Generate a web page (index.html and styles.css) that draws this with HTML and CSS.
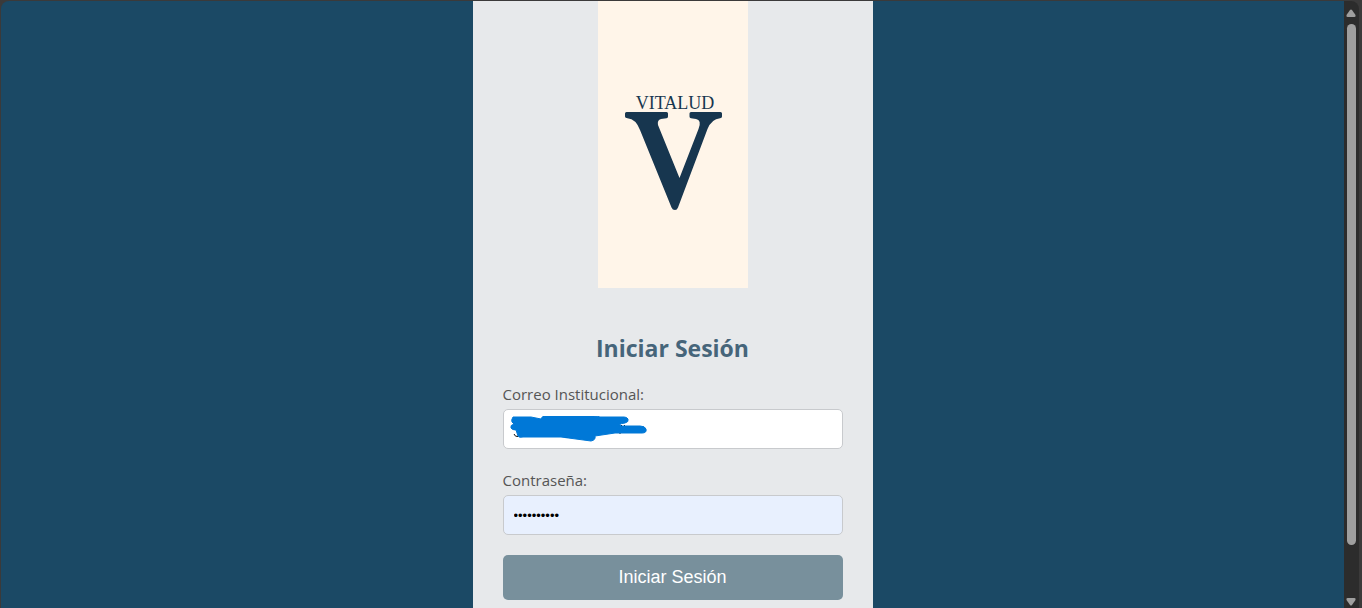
FILE: index.html
```html
<!DOCTYPE html>
<html lang="es">
<head>
<meta charset="utf-8">
<meta name="viewport" content="width=device-width, initial-scale=1">
<title>Iniciar Sesión</title>
<link rel="stylesheet" href="styles.css">
</head>
<body>
<div class="window">
  <main class="page">
    <section class="card">
      <svg class="logo" viewBox="0 0 150 287" role="img" aria-label="Vitalud">
        <rect class="logo-bg" width="150" height="287"/>
        <text class="logo-name" x="77" y="108" text-anchor="middle">VITALUD</text>
        <path class="logo-mark" d="M28.500 111H68.500Q70 111 70 112.500V115.500Q70 117 68.500 117.200L63 118Q59 119 60 124L81.500 177L100.500 128Q104 119 98 118L93 117.200Q91.500 117 91.500 115.500V112.500Q91.500 111 93 111H122.500Q124 111 124 112.500V115.500Q124 117 122 117.200Q113.500 118 109.500 128L80 206.500Q79 209 77 209Q74.500 209 73.500 206.500L42 129Q38 118 29.500 117.200Q27 117 27 115.500V112.500Q27 111 28.500 111Z"/>
      </svg>
      <h1 class="title">Iniciar Sesión</h1>
      <form class="form">
        <div class="field">
          <label class="label" for="email">Correo Institucional:</label>
          <div class="control">
            <input class="input" id="email" type="email" autocomplete="off">
            <svg class="scribble" viewBox="0 0 140 28" aria-hidden="true">
              <path class="scribble-ink" d="M5 18Q6 21 9 20.500M101 9.500h3M106 9.500l3 1M112 9l1 1M116 9l-1 1M110 17h2M56 21.500h4"/>
              <path class="scribble-fill" d="M4 1Q2 4 3 6L5 8Q1 9 2 12Q3 14 7 14L9 20Q10 22 14 21H52L82 25Q87 24 86 20L106 17H133Q138 17 137 13Q136 10 131 10L112 10Q108 8 116 7Q120 6 119 3Q118 1 115 1H91Q89 0 84 0H36Q33 0 32 3L22 1Z"/>
            </svg>
          </div>
        </div>
        <div class="field">
          <label class="label" for="password">Contraseña:</label>
          <input class="input input-filled" id="password" type="password" value="0000000000" autocomplete="off">
        </div>
        <button class="submit" type="submit">Iniciar Sesión</button>
      </form>
    </section>
  </main>
  <div class="scrollbar" aria-hidden="true">
    <svg class="arrow" viewBox="0 0 10 8"><path d="M4 1Q5 0 6 1L9.500 6Q10 8 8.500 8H1.500Q0 8 .500 6Z"/></svg>
    <div class="thumb"></div>
    <svg class="arrow" viewBox="0 0 10 8"><path d="M4 7Q5 8 6 7L9.500 2Q10 0 8.500 0H1.500Q0 0 .500 2Z"/></svg>
  </div>
</div>
</body>
</html>
```
FILE: styles.css
```css
* {
  box-sizing: border-box;
}

body {
  margin: 0;
  background: #3b3a3a;
  font-family: "Segoe UI", "Open Sans", "Noto Sans", sans-serif;
}

.window {
  display: flex;
  height: 100vh;
  padding: 1px 3px 0 1px;
  overflow: hidden;
}

.page {
  flex: 1;
  display: flex;
  justify-content: center;
  align-items: flex-start;
  background: #1b4965;
  border-top-left-radius: 8px;
  overflow: hidden;
}

.card {
  width: 100%;
  max-width: 400px;
  padding: 0 30px 30px;
  background: #e7e9eb;
}

.logo {
  display: block;
  width: 150px;
  margin: 0 auto;
}

.logo-bg {
  fill: #fff5e9;
}

.logo-name {
  fill: #17364f;
  font-family: "Liberation Serif", serif;
  font-size: 18px;
}

.logo-mark {
  fill: #17364f;
}

.title {
  margin: 44px 0 19px;
  color: #46657a;
  font-size: 23px;
  font-weight: 700;
  line-height: 32px;
  text-align: center;
}

.field {
  margin-bottom: 20px;
}

.label {
  display: block;
  margin-bottom: 4px;
  color: #555;
  font-size: 15px;
  line-height: 22px;
}

.control {
  position: relative;
}

.input {
  display: block;
  width: 100%;
  height: 40px;
  padding: 10px;
  border: 1px solid #c8cacd;
  border-radius: 5px;
  background: #fff;
  color: #000;
  font-family: "Liberation Sans", Arial, sans-serif;
  font-size: 13px;
}

.input-filled {
  background: #e8f0fe;
}

.scribble {
  position: absolute;
  top: 7px;
  left: 6px;
  width: 140px;
  height: 28px;
}

.scribble-fill {
  fill: #0078d7;
  stroke: #0078d7;
  stroke-linejoin: round;
}

.scribble-ink {
  fill: none;
  stroke: #111;
}

.submit {
  display: block;
  width: 100%;
  height: 45px;
  border: 0;
  border-radius: 5px;
  background: #78909c;
  color: #fff;
  font-family: "Liberation Sans", Arial, sans-serif;
  font-size: 18px;
}

.scrollbar {
  display: flex;
  flex-direction: column;
  align-items: center;
  gap: 7px;
  width: 15px;
  padding: 8px 1px 2px 0;
  background: #2c2c2c;
  border-top-right-radius: 8px;
}

.arrow {
  width: 10px;
  height: 8px;
  flex: none;
  fill: #9f9f9f;
}

.thumb {
  flex: 1;
  width: 9px;
  margin-bottom: 46px;
  border-radius: 5px;
  background: #9f9f9f;
}
```
